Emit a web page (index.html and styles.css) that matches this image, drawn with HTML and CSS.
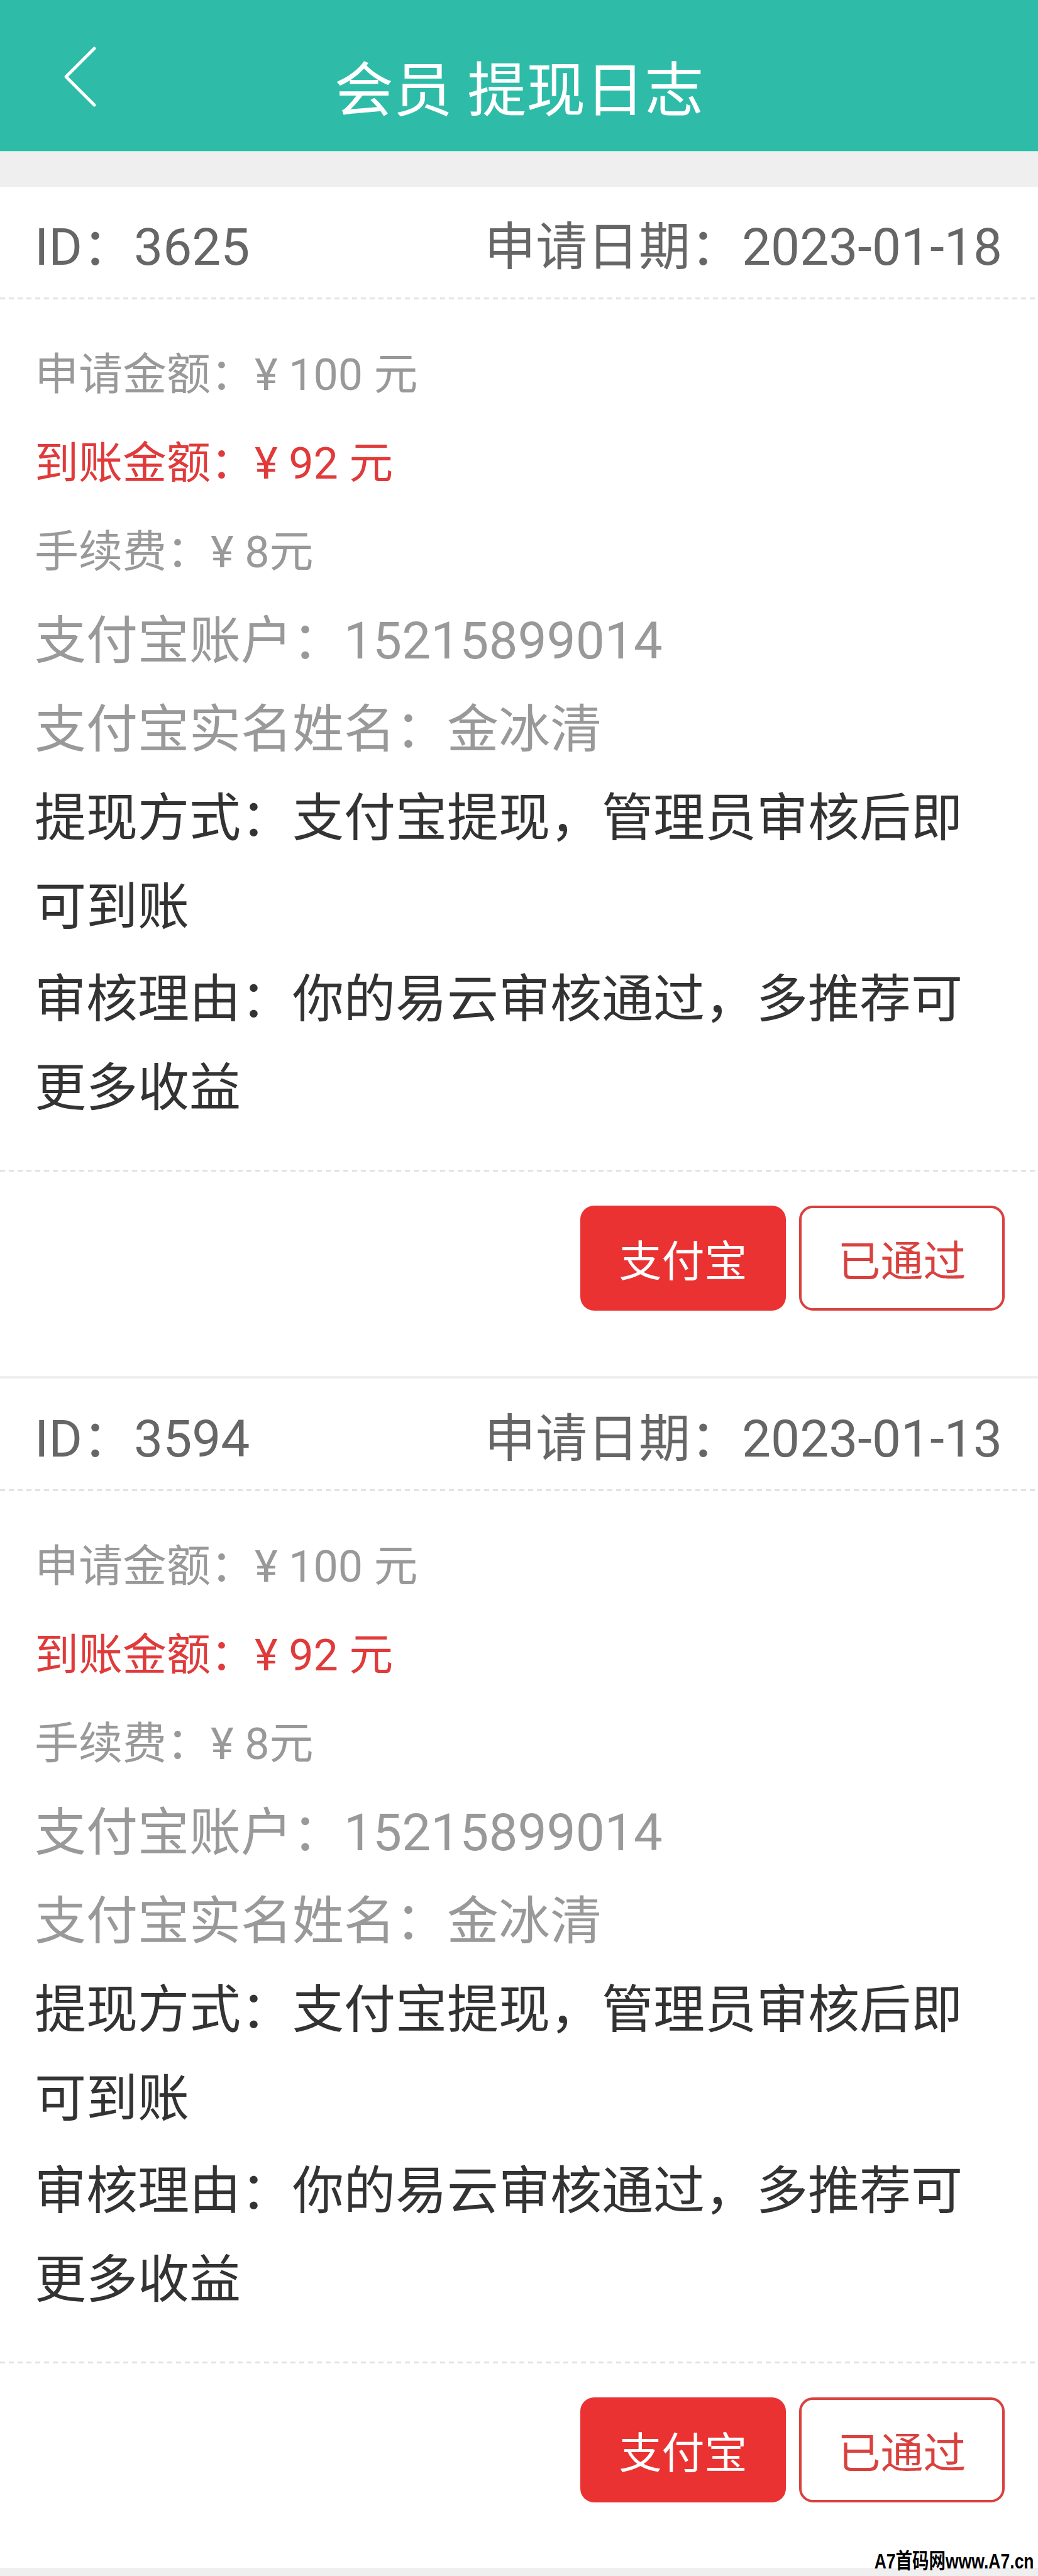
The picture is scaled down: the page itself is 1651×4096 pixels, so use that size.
FILE: index.html
```html
<!DOCTYPE html>
<html lang="zh-CN">

<head>
    <meta charset="UTF-8">
    <meta name="viewport" content="width=device-width, initial-scale=1.0">
    <title>会员 提现日志</title>
    <link rel="stylesheet" href="styles.css">
</head>

<body>
    <div class="page">
        <header class="topbar">
            <a class="back" href="#">
                <svg viewBox="0 0 60 100" width="60" height="100">
                    <polyline points="50,5 5,50 50,95" />
                </svg>
            </a>
            <h1 class="title">会员 提现日志</h1>
        </header>

        <div class="list">
            <div class="card">
                <div class="card-head">
                    <span>ID：3625</span>
                    <span>申请日期：2023-01-18</span>
                </div>
                <div class="dash"></div>
                <div class="card-body">
                    <p class="small">申请金额：¥ 100 元</p>
                    <p class="small red">到账金额：¥ 92 元</p>
                    <p class="small">手续费：¥ 8元</p>
                    <p class="light">支付宝账户：15215899014</p>
                    <p class="light">支付宝实名姓名：金冰清</p>
                    <p>提现方式：支付宝提现，管理员审核后即可到账</p>
                    <p class="reason">审核理由：你的易云审核通过，多推荐可更多收益</p>
                </div>
                <div class="dash"></div>
                <div class="card-foot">
                    <span class="btn btn-fill">支付宝</span>
                    <span class="btn btn-line">已通过</span>
                </div>
            </div>

            <div class="card">
                <div class="card-head">
                    <span>ID：3594</span>
                    <span>申请日期：2023-01-13</span>
                </div>
                <div class="dash"></div>
                <div class="card-body">
                    <p class="small">申请金额：¥ 100 元</p>
                    <p class="small red">到账金额：¥ 92 元</p>
                    <p class="small">手续费：¥ 8元</p>
                    <p class="light">支付宝账户：15215899014</p>
                    <p class="light">支付宝实名姓名：金冰清</p>
                    <p>提现方式：支付宝提现，管理员审核后即可到账</p>
                    <p class="reason">审核理由：你的易云审核通过，多推荐可更多收益</p>
                </div>
                <div class="dash"></div>
                <div class="card-foot">
                    <span class="btn btn-fill">支付宝</span>
                    <span class="btn btn-line">已通过</span>
                </div>
            </div>
        </div>

        <div class="watermark">A7首码网www.A7.cn</div>
    </div>
</body>

</html>
```

FILE: styles.css
```css
html {
    background-color: #efefef;
}

body {
    margin: 0;
    padding: 0;
    font-family: Roboto, "Noto Sans CJK SC", sans-serif;
    color: #333;
}

.page {
    position: relative;
}

/* top bar */
.topbar {
    display: grid;
    grid-template-columns: 1fr auto 1fr;
    height: 240px;
    background-color: #2ebca8;
    border-bottom: 2px solid #bfeee6;
}

.back {
    align-self: start;
    margin: 72px 0 0 100px;
    width: 60px;
    height: 100px;
}

.back svg {
    display: block;
}

.back polyline {
    fill: none;
    stroke: #fff;
    stroke-width: 5;
    stroke-linecap: round;
    stroke-linejoin: round;
}

.title {
    align-self: center;
    margin: 32px 0 0;
    font-size: 94px;
    font-weight: normal;
    color: #fff;
    white-space: nowrap;
}

/* list */
.list {
    padding: 55px 0 13px;
}

.card {
    background-color: #fff;
    margin-bottom: 4px;
}

.card:last-child {
    margin-bottom: 0;
}

.card-head {
    display: flex;
    justify-content: space-between;
    align-items: center;
    height: 176px;
    padding: 0 57px 0 55px;
    font-size: 82px;
    color: #666;
}

.dash {
    height: 3px;
    background: repeating-linear-gradient(90deg, #e2e2e2 0 8px, transparent 8px 14px);
}

.card-body {
    padding: 50px 57px 59px 55px;
}

.card-body p {
    margin: 0;
    font-size: 82px;
    line-height: 141px;
    color: #333;
}

.card-body p.small {
    font-size: 70px;
    color: #999;
}

.card-body p.light {
    color: #999;
}

.card-body p.red {
    color: #e03a3a;
}

.card-body p.reason {
    margin-top: 6px;
}

.card-foot {
    display: flex;
    justify-content: flex-end;
    gap: 21px;
    padding: 54px 53px 104px;
}

.btn {
    display: flex;
    align-items: center;
    justify-content: center;
    box-sizing: border-box;
    width: 327px;
    height: 167px;
    border-radius: 22px;
    font-size: 68px;
}

.btn-fill {
    background-color: #ea3232;
    color: #fff;
}

.btn-line {
    border: 4px solid #d9413f;
    color: #d9413f;
    background-color: #fff;
}

.watermark {
    position: absolute;
    right: 6px;
    bottom: 2px;
    font-family: "Liberation Sans", "Noto Sans CJK SC", sans-serif;
    font-size: 34px;
    font-weight: bold;
    color: #000;
    transform: scaleX(0.78);
    transform-origin: right bottom;
}
```
